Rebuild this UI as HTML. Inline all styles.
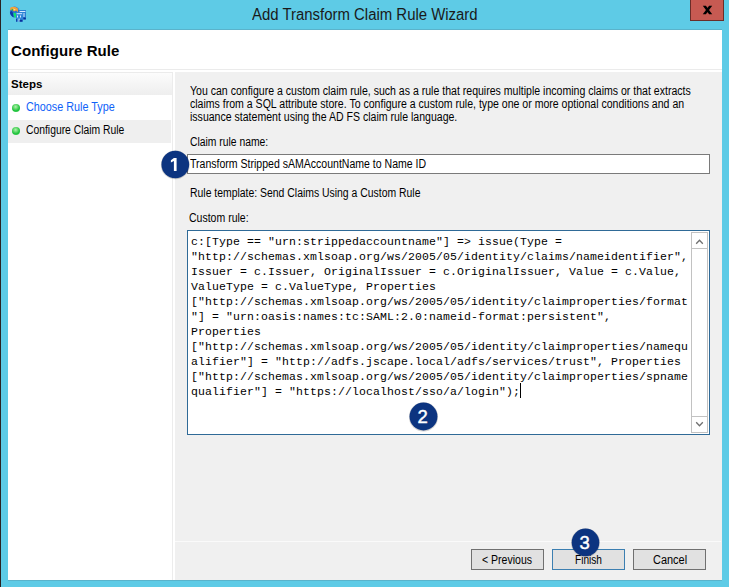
<!DOCTYPE html>
<html><head><meta charset="utf-8">
<style>
*{margin:0;padding:0;box-sizing:border-box}
html,body{width:729px;height:587px;overflow:hidden;background:#5ecbe6}
body{position:relative;font-family:"Liberation Sans",sans-serif;color:#000}
.a{position:absolute}
.t{position:absolute;white-space:pre;font-size:12.5px;line-height:14px;transform-origin:0 0}
#edge{left:0;top:0;width:1px;height:587px;background:#2a2222}
#title{left:252px;top:5px;font-size:16px;line-height:20px;color:#1a1a1a;transform:scaleX(0.933)}
#close{left:690px;top:-1px;width:34px;height:22px;background:#c75a52;border:1px solid #6a2d28}
#client{left:8px;top:30px;width:714px;height:550px;background:#fff}
#hdrline{left:8px;top:69px;width:714px;height:1px;background:#ebebeb}
#hdr{left:11px;top:42px;font-weight:bold;font-size:15px;line-height:18px;letter-spacing:0.07px}
#steps{left:8px;top:72px;width:165px;height:508px;background:#fff;border-top:1px solid #ebebeb;border-right:1px solid #ececec}
#stepshdr{left:8px;top:73px;width:164px;height:22px;background:linear-gradient(#fcfcfc,#eeeeee)}
#sel{left:8px;top:120px;width:163px;height:23px;background:#efefef}
.dot{position:absolute;width:8px;height:8px;border-radius:50%;background:radial-gradient(circle at 45% 35%,#b2eeb2 0,#5ad865 35%,#1cc03c 60%,#48d458 85%,#22bb3c 100%)}
#right{left:175px;top:72px;width:547px;height:508px;background:#f0f0f0}
#sepw{left:175px;top:541px;width:546px;height:1px;background:#fafafa}
.btn{position:absolute;top:549px;height:21px;background:#e1e1e1;border:1px solid #707070}
#tb1{left:187px;top:154px;width:523px;height:20px;background:#fff;border:1px solid #7a7a7a}
#tb2{left:187px;top:230px;width:523px;height:205px;background:#fff;border:1px solid #2f6a97}
#sb{left:691px;top:232px;width:17px;height:201px;background:#fff;border:1px solid #c2c2c2}
#sbu{left:691px;top:232px;width:17px;height:17px;border:1px solid #c2c2c2}
#sbd{left:691px;top:416px;width:17px;height:17px;border:1px solid #c2c2c2}
.code{position:absolute;left:191px;white-space:pre;font-family:"Liberation Mono",monospace;font-size:11.5px;letter-spacing:0.1px;line-height:15px;color:#000}
.circ{position:absolute;width:28px;height:28px;border-radius:50%;background:#0e2f72;color:#fff;font-weight:bold;font-size:17px;line-height:28px;text-align:center;box-shadow:0 1px 2px rgba(0,0,0,.35)}
</style></head><body>
<div id="edge" class="a"></div>
<svg class="a" style="left:8px;top:4px" width="22" height="20" viewBox="0 0 22 20">
  <ellipse cx="6.6" cy="7.9" rx="4.7" ry="5.5" fill="#2a6fd0"/>
  <path d="M2 8 Q2 11.5 5.5 13.4 L5 9 L3.8 7 Z" fill="#0b3aa8"/>
  <path d="M2.2 3.8 Q4.5 2.4 7.5 3 L9.8 4.2 L10 8.2 L8.2 6.6 L6 7.6 L4.6 6 L2.2 6.2 Z" fill="#f2a23a"/>
  <path d="M5 4.6 L7.6 5.4 L6.6 6.4 Z" fill="#ffe0a0"/>
  <path d="M3.6 4.8 L5 5 L4.6 7 L3.6 6.6 Z" fill="#18c050"/>
  <path d="M5.4 9 Q7 8.4 8 9.6 L8.2 13.4 L6.6 13.4 Q5.2 11.6 5.4 9 Z" fill="#10e070"/>
  <path d="M10.6 3.4 Q11.4 4.5 11.2 6 L10 6 Z" fill="#4090e0"/>
  <rect x="11" y="6" width="7" height="9.5" fill="#2a80d2"/>
  <rect x="11.6" y="7" width="5.8" height="1" fill="#d8eaff"/>
  <rect x="15.5" y="9" width="1" height="4" fill="#d8eaff"/>
  <rect x="15.4" y="13.6" width="2.4" height="1.8" fill="#0a2f9a"/>
  <rect x="8" y="8.2" width="7" height="9.5" fill="#2f86d8"/>
  <rect x="8.6" y="9.2" width="5.6" height="1" fill="#d8eaff"/>
  <rect x="9" y="11.5" width="1" height="2" fill="#d8eaff"/><rect x="12" y="11.5" width="1" height="2" fill="#d8eaff"/>
  <rect x="10.6" y="14.6" width="1" height="3" fill="#e8f2ff"/>
  <rect x="11.6" y="15.8" width="2.8" height="1.9" fill="#0a2f9a"/>
  <rect x="8" y="15" width="0.8" height="2.7" fill="#0a2f9a"/>
</svg>
<div id="title" class="t">Add Transform Claim Rule Wizard</div>
<div id="close" class="a"></div>
<svg class="a" style="left:700px;top:3px" width="16" height="14" viewBox="0 0 16 14"><path d="M2.8 2.7 L5.9 2.7 L12.2 11.3 L9.1 11.3 Z M9.1 2.7 L12.2 2.7 L5.9 11.3 L2.8 11.3 Z" fill="#000"/></svg>

<div class="a" style="left:8px;top:29px;width:714px;height:1px;background:#5ab3cb"></div>
<div class="a" style="left:8px;top:580px;width:714px;height:1px;background:#5ab3cb"></div>
<div id="client" class="a"></div>
<div id="hdr" class="t">Configure Rule</div>
<div id="hdrline" class="a"></div>
<div id="steps" class="a"></div>
<div id="stepshdr" class="a"></div>
<div class="t" style="left:11px;top:77px;font-weight:bold;font-size:11.5px">Steps</div>
<div id="sel" class="a"></div>
<div class="dot" style="left:12px;top:104px"></div>
<div class="dot" style="left:12px;top:127px"></div>
<div class="t" style="left:26px;top:100px;color:#0f62f8;transform:scaleX(0.8639)">Choose Rule Type</div>
<div class="t" style="left:26px;top:123px;transform:scaleX(0.8280)">Configure Claim Rule</div>

<div id="right" class="a"></div>
<div class="t" style="left:190px;top:85px;line-height:13px;transform:scaleX(0.8436)">You can configure a custom claim rule, such as a rule that requires multiple incoming claims or that extracts
claims from a SQL attribute store. To configure a custom rule, type one or more optional conditions and an
issuance statement using the AD FS claim rule language.</div>
<div class="t" style="left:190px;top:135px;transform:scaleX(0.8280)">Claim rule name:</div>
<div id="tb1" class="a"></div>
<div class="t" style="left:190px;top:157px;transform:scaleX(0.8427)">Transform Stripped sAMAccountName to Name ID</div>
<div class="t" style="left:190px;top:186px;transform:scaleX(0.8335)">Rule template: Send Claims Using a Custom Rule</div>
<div class="t" style="left:189px;top:211px;transform:scaleX(0.8409)">Custom rule:</div>
<div id="tb2" class="a"></div>
<div id="sb" class="a"></div>
<div id="sbu" class="a"></div>
<div id="sbd" class="a"></div>
<div class="a" style="left:520px;top:383px;width:1px;height:15px;background:#000"></div>
<svg class="a" style="left:691px;top:232px" width="17" height="201" viewBox="0 0 17 201"><path d="M5.2 11.8 L8.5 8.3 L11.8 11.8" fill="none" stroke="#707070" stroke-width="1.3"/><path d="M5.2 190.2 L8.5 193.7 L11.8 190.2" fill="none" stroke="#707070" stroke-width="1.3"/></svg>
<div class="code" style="top:234px">c:[Type == "urn:strippedaccountname"] =&gt; issue(Type =
"http://schemas.xmlsoap.org/ws/2005/05/identity/claims/nameidentifier",
Issuer = c.Issuer, OriginalIssuer = c.OriginalIssuer, Value = c.Value,
ValueType = c.ValueType, Properties
["http://schemas.xmlsoap.org/ws/2005/05/identity/claimproperties/format
"] = "urn:oasis:names:tc:SAML:2.0:nameid-format:persistent",
Properties
["http://schemas.xmlsoap.org/ws/2005/05/identity/claimproperties/namequ
alifier"] = "http://adfs.jscape.local/adfs/services/trust", Properties
["http://schemas.xmlsoap.org/ws/2005/05/identity/claimproperties/spname
qualifier"] = "https://localhost/sso/a/login");</div>

<div id="sepw" class="a"></div>
<div class="btn" style="left:471px;width:73px"></div>
<div class="btn" style="left:552px;width:73px;border-color:#3c7fb1"></div>
<div class="btn" style="left:633px;width:73px"></div>
<div class="t" style="left:482px;top:553px;transform:scaleX(0.8418)">&lt; Previous</div>
<div class="t" style="left:575px;top:553px;transform:scaleX(0.8096)">Finish</div>
<div class="t" style="left:653px;top:553px;transform:scaleX(0.8768)">Cancel</div>

<svg class="a" style="left:159px;top:148px" width="32" height="32" viewBox="0 0 32 32"><circle cx="16.30" cy="16.90" r="14.45" fill="rgba(0,0,0,0.18)"/><circle cx="16.30" cy="16.50" r="13.85" fill="#0c3480"/><path d="M14.90 10.00 L17.60 10.00 L17.60 23.00 L14.90 23.00 L14.90 13.00 L11.90 14.40 L11.90 12.30 Z" fill="#fff"/></svg>
<svg class="a" style="left:407px;top:400px" width="32" height="32" viewBox="0 0 32 32"><circle cx="16.50" cy="16.90" r="14.55" fill="rgba(0,0,0,0.18)"/><circle cx="16.50" cy="16.50" r="13.95" fill="#0c3480"/><text x="15.60" y="23.10" text-anchor="middle" font-family="Liberation Sans" font-weight="normal" stroke="#fff" stroke-width="0.45" font-size="18.5" fill="#fff">2</text></svg>
<svg class="a" style="left:569px;top:526px" width="32" height="32" viewBox="0 0 32 32"><circle cx="16.50" cy="16.80" r="14.40" fill="rgba(0,0,0,0.18)"/><circle cx="16.50" cy="16.40" r="13.80" fill="#0c3480"/><text x="15.60" y="23.00" text-anchor="middle" font-family="Liberation Sans" font-weight="normal" stroke="#fff" stroke-width="0.45" font-size="18.5" fill="#fff">3</text></svg>
</body></html>
